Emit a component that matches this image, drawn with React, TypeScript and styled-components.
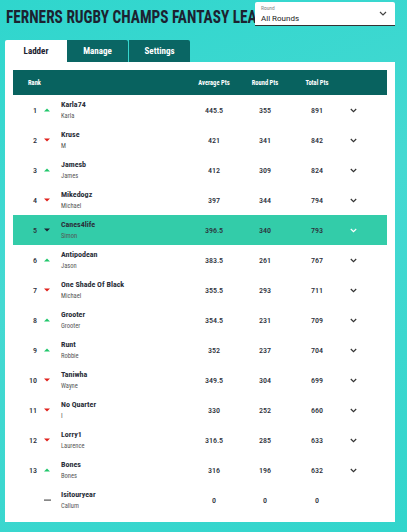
import React from 'react';
import styled, { createGlobalStyle } from 'styled-components';

const GlobalStyle = createGlobalStyle`
  html, body {
    margin: 0;
    padding: 0;
  }
  body {
    width: 407px;
    height: 532px;
    overflow: hidden;
    font-family: "Roboto Condensed", "Liberation Sans Narrow", Roboto, "Liberation Sans", sans-serif;
    background: linear-gradient(160deg, #2fd6cd 0%, #45d9d2 45%, #32d5cc 100%);
    color: #333;
  }
`;

const Page = styled.div`
  padding: 2px 12px 10px 5px;
`;

const TopBar = styled.div`
  display: flex;
  align-items: flex-start;
  height: 38px;
`;

const Title = styled.h1`
  flex: 1;
  min-width: 0;
  margin: 4px 0 0 1px;
  white-space: nowrap;
  overflow: hidden;
  font-size: 18px;
  font-weight: 700;
  color: #1c2230;
`;

// no condensed face installed, so squeeze the title text horizontally
const TitleText = styled.span`
  display: inline-block;
  transform: scaleX(0.85);
  transform-origin: left center;
`;

const Select = styled.div`
  width: 140px;
  height: 24px;
  box-sizing: border-box;
  background: #fff;
  border-bottom: 1px solid #333;
  border-radius: 2px 2px 0 0;
  padding: 3px 8px 0 6px;
  position: relative;
`;

const SelectLabel = styled.div`
  font-size: 5.5px;
  color: #888;
  line-height: 6px;
`;

const SelectValue = styled.div`
  font-family: Roboto, "Liberation Sans", sans-serif;
  font-size: 8px;
  color: #222;
  line-height: 10px;
  margin-top: 3px;
`;

const SelectIcon = styled.svg`
  position: absolute;
  right: 8px;
  top: 9px;
`;

const Tabs = styled.div`
  display: flex;
  gap: 1px;
`;

const Tab = styled.div<{ $active?: boolean }>`
  width: ${({ $active }) => ($active ? '62px' : '61px')};
  height: 22px;
  display: flex;
  align-items: center;
  justify-content: center;
  font-size: 9px;
  font-weight: 700;
  background: ${({ $active }) => ($active ? '#fff' : '#0a6664')};
  color: ${({ $active }) => ($active ? '#1c2230' : '#fff')};
  border-radius: ${({ $active }) => ($active ? '2px 0 0 0' : '0 2px 0 0')};
  margin-right: ${({ $active }) => ($active ? '-1px' : '0')};
`;

const Card = styled.div`
  background: #fff;
  width: 390px;
  padding: 8px 8px 7px;
  box-sizing: border-box;
`;

const GRID = '26px 22px 128px 50px 52px 52px 1fr';

const HeaderRow = styled.div`
  display: grid;
  grid-template-columns: ${GRID};
  align-items: center;
  height: 25px;
  background: #08625f;
  color: #fff;
  font-size: 6.5px;
  font-weight: 700;
`;

const HeadCell = styled.div<{ $align?: string }>`
  text-align: ${({ $align }) => $align || 'center'};
  padding-left: ${({ $align }) => ($align === 'left' ? '15px' : '0')};
`;

const Row = styled.div<{ $highlight?: boolean }>`
  display: grid;
  grid-template-columns: ${GRID};
  align-items: center;
  height: 30px;
  background: ${({ $highlight }) => ($highlight ? '#33cca9' : 'transparent')};
  color: #2b2f3a;
`;

const RankNum = styled.div`
  text-align: right;
  padding-right: 2px;
  font-size: 8px;
  font-weight: 500;
`;

const Trend = styled.div`
  padding-left: 5px;
  display: flex;
  align-items: center;
`;

const NameCell = styled.div`
  display: flex;
  flex-direction: column;
  gap: 2px;
  white-space: nowrap;
`;

const Team = styled.div`
  font-size: 8px;
  font-weight: 700;
  line-height: 10px;
`;

const Owner = styled.div`
  font-size: 6.5px;
  color: #555;
  line-height: 8px;
`;

const Num = styled.div`
  text-align: center;
  font-size: 8px;
  font-weight: 500;
`;

const Chevron = styled.div<{ $light?: boolean }>`
  padding-left: 7px;
  display: flex;
  color: ${({ $light }) => ($light ? '#fff' : '#333')};
`;

type Move = 'up' | 'down' | 'same';

interface Entry {
  rank: string;
  move: Move;
  team: string;
  owner: string;
  avg: string;
  round: string;
  total: string;
  highlight?: boolean;
  noChevron?: boolean;
}

const entries: Entry[] = [
  { rank: '1', move: 'up', team: 'Karla74', owner: 'Karla', avg: '445.5', round: '355', total: '891' },
  { rank: '2', move: 'down', team: 'Kruse', owner: 'M', avg: '421', round: '341', total: '842' },
  { rank: '3', move: 'up', team: 'Jamesb', owner: 'James', avg: '412', round: '309', total: '824' },
  { rank: '4', move: 'down', team: 'Mikedogz', owner: 'Michael', avg: '397', round: '344', total: '794' },
  { rank: '5', move: 'down', team: 'Canes4life', owner: 'Simon', avg: '396.5', round: '340', total: '793', highlight: true },
  { rank: '6', move: 'up', team: 'Antipodean', owner: 'Jason', avg: '383.5', round: '261', total: '767' },
  { rank: '7', move: 'down', team: 'One Shade Of Black', owner: 'Michael', avg: '355.5', round: '293', total: '711' },
  { rank: '8', move: 'up', team: 'Grooter', owner: 'Grooter', avg: '354.5', round: '231', total: '709' },
  { rank: '9', move: 'up', team: 'Runt', owner: 'Robbie', avg: '352', round: '237', total: '704' },
  { rank: '10', move: 'down', team: 'Taniwha', owner: 'Wayne', avg: '349.5', round: '304', total: '699' },
  { rank: '11', move: 'down', team: 'No Quarter', owner: 'I', avg: '330', round: '252', total: '660' },
  { rank: '12', move: 'down', team: 'Lorry1', owner: 'Laurence', avg: '316.5', round: '285', total: '633' },
  { rank: '13', move: 'up', team: 'Bones', owner: 'Bones', avg: '316', round: '196', total: '632' },
  { rank: '', move: 'same', team: 'Isitouryear', owner: 'Callum', avg: '0', round: '0', total: '0', noChevron: true },
];

const TrendIcon: React.FC<{ move: Move; highlight?: boolean }> = ({ move, highlight }) => {
  if (move === 'same') {
    return (
      <svg width="7" height="4" viewBox="0 0 7 4">
        <rect x="0" y="1.5" width="7" height="1.2" fill="#555" />
      </svg>
    );
  }
  const color = highlight ? '#1c2230' : move === 'up' ? '#1fc76a' : '#e0201b';
  return (
    <svg width="6" height="4" viewBox="0 0 6 4">
      {move === 'up' ? (
        <polygon points="0,3.5 6,3.5 3,0.5" fill={color} />
      ) : (
        <polygon points="0,0.5 6,0.5 3,3.5" fill={color} />
      )}
    </svg>
  );
};

const ChevronIcon = () => (
  <svg width="7" height="5" viewBox="0 0 7 5">
    <path d="M0.8 1 L3.5 3.6 L6.2 1" fill="none" stroke="currentColor" strokeWidth="1.2" />
  </svg>
);

const App: React.FC = () => {
  return (
    <>
      <GlobalStyle />
      <Page>
        <TopBar>
          <Title>
            <TitleText>FERNERS RUGBY CHAMPS FANTASY LEAGUE</TitleText>
          </Title>
          <Select>
            <SelectLabel>Round</SelectLabel>
            <SelectValue>All Rounds</SelectValue>
            <SelectIcon width="8" height="5" viewBox="0 0 8 5">
              <path d="M1 1 L4 4 L7 1" fill="none" stroke="#444" strokeWidth="1.2" />
            </SelectIcon>
          </Select>
        </TopBar>
        <Tabs>
          <Tab $active>Ladder</Tab>
          <Tab>Manage</Tab>
          <Tab>Settings</Tab>
        </Tabs>
        <Card>
          <HeaderRow>
            <HeadCell $align="left" style={{ gridColumn: 'span 3' }}>Rank</HeadCell>
            <HeadCell>Average Pts</HeadCell>
            <HeadCell>Round Pts</HeadCell>
            <HeadCell>Total Pts</HeadCell>
            <div />
          </HeaderRow>
          {entries.map((e) => (
            <Row key={e.team} $highlight={e.highlight}>
              <RankNum>{e.rank}</RankNum>
              <Trend>
                <TrendIcon move={e.move} highlight={e.highlight} />
              </Trend>
              <NameCell>
                <Team>{e.team}</Team>
                <Owner>{e.owner}</Owner>
              </NameCell>
              <Num>{e.avg}</Num>
              <Num>{e.round}</Num>
              <Num>{e.total}</Num>
              <Chevron $light={e.highlight}>{!e.noChevron && <ChevronIcon />}</Chevron>
            </Row>
          ))}
        </Card>
      </Page>
    </>
  );
};

export default App;
